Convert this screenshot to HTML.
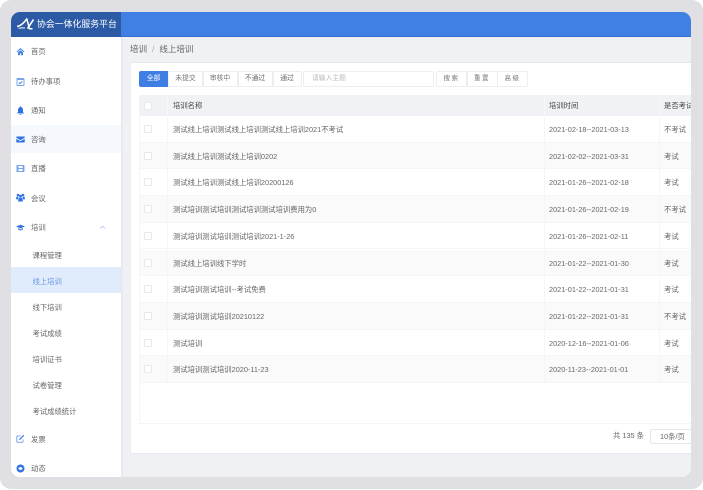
<!DOCTYPE html>
<html lang="zh">
<head>
<meta charset="utf-8">
<title>协会一体化服务平台</title>
<style>
html,body{margin:0;padding:0;background:#fff;}
body{width:703px;height:490px;overflow:hidden;position:relative;font-family:"Liberation Sans","Noto Sans CJK SC",sans-serif;font-size:7.33px;color:#666;}
.frame{position:absolute;left:0;top:0;width:703px;height:489px;background:#e0e0e4;border-radius:11px;}
.win{position:absolute;left:11px;top:12px;width:680px;height:465px;background:#f0f1f5;border-radius:9px;overflow:hidden;}
.blur{position:absolute;left:0;top:0;width:680px;height:465px;filter:blur(.3px);}
.a{position:absolute;white-space:nowrap;line-height:10px;}
.hd{position:absolute;left:0;top:0;width:680px;height:24px;background:#4080e4;border-bottom:1px solid #3270d8;}
.logo{position:absolute;left:0;top:0;width:110px;height:25px;background:#2c5aa5;}
.title{position:absolute;left:26px;top:7px;font-size:8.9px;line-height:11px;color:#fff;white-space:nowrap;}
.side{position:absolute;left:0;top:25px;width:110px;height:440px;background:#fff;}
.sep{position:absolute;left:110px;top:25px;width:2px;height:440px;background:#e9eaef;}
.m{position:absolute;left:20px;color:#666;white-space:nowrap;line-height:10px;}
.s{position:absolute;left:21.5px;color:#666;white-space:nowrap;line-height:10px;}
.ic{position:absolute;left:5px;width:9px;height:9px;}
.card{position:absolute;left:119px;top:50px;width:561px;height:392px;background:#fff;border-top:1px solid #e6e7ec;border-left:1px solid #ebecf0;border-bottom:1.5px solid #e8e9ee;box-sizing:border-box;}
.tab{position:absolute;top:59px;height:16px;box-sizing:border-box;background:#fff;border:1px solid #eceef2;text-align:center;line-height:14px;font-size:6.8px;color:#777;}
.hrow{position:absolute;left:128px;top:83px;width:552px;height:21px;background:#f1f2f6;}
.row{position:absolute;left:128px;width:552px;height:26.7px;box-sizing:border-box;border-bottom:1px solid #f4f5f8;}
.row.alt{background:#fafafa;}
.cb{position:absolute;left:5px;top:9px;width:8px;height:8px;box-sizing:border-box;border:1px solid #e8e9ed;border-radius:1px;background:#fff;}
.v{position:absolute;top:0;bottom:0;width:1px;background:#f5f6f9;}
.t{position:absolute;top:9px;line-height:10px;white-space:nowrap;color:#666;}
.th{position:absolute;top:6px;line-height:10px;white-space:nowrap;color:#444;}
</style>
</head>
<body>
<div class="frame"></div>
<div class="win"><div class="blur">
  <div class="hd"></div>
  <div class="logo">
    <svg style="position:absolute;left:6px;top:6px" width="18" height="12" viewBox="0 0 18 12"><path d="M0 8.500C3 8.300 6 6 9.800 1L12.500 10.800H15.500" fill="none" stroke="#fff" stroke-width="1.500"/><path d="M10.500 10.500L16.500 1.500" fill="none" stroke="#fff" stroke-width="1.600"/><path d="M1.500 10.300C3.500 9.800 5.500 9.800 8 10" fill="none" stroke="#fff" stroke-width="1"/></svg>
    <div class="title">协会一体化服务平台</div>
  </div>
  <div class="side">
    <div style="position:absolute;left:0;top:88px;width:110px;height:28px;background:#f5f8fd"></div>
    <div style="position:absolute;left:0;top:230px;width:110px;height:26px;background:#e0ebfb"></div>

    <svg class="ic" style="top:10px" viewBox="0 0 9 9"><path d="M4.500 1L0.500 4.800 1.300 5.300 4.500 2.400 7.700 5.300 8.500 4.800ZM2 5.500V8.300H3.900V6.200H5.100V8.300H7V5.500L4.500 3.200Z" fill="#3f7fe4"/></svg>
    <div class="m" style="top:10px">首页</div>

    <svg class="ic" style="top:40px" viewBox="0 0 9 9"><rect x="1" y="1.500" width="7" height="7" rx=".8" fill="none" stroke="#7ba4e8" stroke-width="1"/><path d="M1 1.500H8V3H1Z" fill="#7ba4e8"/><path d="M2.800 5.500L4 6.700 6.300 4.300" fill="none" stroke="#3f7fe4" stroke-width=".9"/></svg>
    <div class="m" style="top:40px">待办事项</div>

    <svg class="ic" style="top:68.500px" viewBox="0 0 9 9"><path d="M4.500 .5C5 .5 5.300 .8 5.300 1.300 6.500 1.700 7 2.800 7 4V6L8.200 7.400H.8L2 6V4C2 2.800 2.500 1.700 3.700 1.300 3.700 .8 4 .5 4.500 .5ZM3.500 7.900H5.500C5.500 8.500 5 8.900 4.500 8.900S3.500 8.500 3.500 7.900Z" fill="#2f72e0"/></svg>
    <div class="m" style="top:69px">通知</div>

    <svg class="ic" style="top:98px" viewBox="0 0 9 9"><path d="M.8 1.500H8.200C8.500 1.500 8.700 1.700 8.700 2V2.600L4.500 5.300 .3 2.600V2C.3 1.700 .5 1.500 .8 1.500ZM.3 3.700L4.500 6.300 8.700 3.700V7C8.700 7.300 8.500 7.500 8.200 7.500H.8C.5 7.500 .3 7.300 .3 7Z" fill="#2f72e0"/></svg>
    <div class="m" style="top:98px">咨询</div>

    <svg class="ic" style="top:127px" viewBox="0 0 9 9"><rect x=".5" y="1" width="8" height="7" rx=".8" fill="#7ba4e8"/><rect x="2.500" y="2" width="4" height="2" fill="#fff"/><rect x="2.500" y="5" width="4" height="2" fill="#fff"/></svg>
    <div class="m" style="top:127px">直播</div>

    <svg class="ic" style="top:156px" viewBox="0 0 9 9"><circle cx="2" cy="2" r="1.300" fill="#2f72e0"/><circle cx="7" cy="2" r="1.300" fill="#2f72e0"/><circle cx="4.500" cy="3.200" r="1.500" fill="#2f72e0"/><path d="M.2 3.800H2.500L2 6.400H.2ZM8.800 3.800H6.500L7 6.400H8.800ZM2.700 5H6.300L7 8.500H2Z" fill="#2f72e0"/></svg>
    <div class="m" style="top:157px">会议</div>

    <svg class="ic" style="top:185.500px" viewBox="0 0 9 9"><path d="M4.500 1.800L9 3.500 4.500 5.200 0 3.500Z" fill="#2f72e0"/><path d="M2 5V6.800C3.500 7.700 5.500 7.700 7 6.800V5L4.500 5.900Z" fill="#6b9ae8"/></svg>
    <div class="m" style="top:186px">培训</div>
    <svg style="position:absolute;left:88px;top:188px" width="7" height="5" viewBox="0 0 7 5"><path d="M1 3.500L3.500 1.200 6 3.500" fill="none" stroke="#a9c3ee" stroke-width=".8"/></svg>

    <div class="s" style="top:214px">课程管理</div>
    <div class="s" style="top:240px;color:#6a9ae6">线上培训</div>
    <div class="s" style="top:266px">线下培训</div>
    <div class="s" style="top:292px">考试成绩</div>
    <div class="s" style="top:318px">培训证书</div>
    <div class="s" style="top:344px">试卷管理</div>
    <div class="s" style="top:370px">考试成绩统计</div>

    <svg class="ic" style="top:397px" viewBox="0 0 9 9"><path d="M7 5.500V7.500C7 7.900 6.700 8.200 6.300 8.200H1.500C1.100 8.200 .8 7.900 .8 7.500V2.700C.8 2.300 1.100 2 1.500 2H4.500" fill="none" stroke="#7ba4e8" stroke-width="1"/><path d="M3.300 4.900L7.300 .9 8.200 1.800 4.200 5.800 3 6.100Z" fill="#3f7fe4"/></svg>
    <div class="m" style="top:398px">发票</div>

    <svg class="ic" style="top:426.500px" viewBox="0 0 9 9"><circle cx="4.500" cy="4.500" r="4" fill="#2f72e0"/><ellipse cx="4.500" cy="4.500" rx="2" ry="1.400" fill="#fff"/></svg>
    <div class="m" style="top:427px">动态</div>
  </div>
  <div class="sep"></div>

  <div class="a" style="left:119px;top:32px;font-size:8.5px;color:#666">培训<span style="color:#aaa;margin:0 5px">/</span>线上培训</div>

  <div class="card"></div>

  <div class="tab" style="left:128px;width:29px;background:#3f7fe4;border-color:#3f7fe4;color:#fff;border-radius:2px 0 0 2px">全部</div>
  <div class="tab" style="left:157px;width:35px">未提交</div>
  <div class="tab" style="left:191.500px;width:35px">审核中</div>
  <div class="tab" style="left:226.500px;width:35px;color:#666">不通过</div>
  <div class="tab" style="left:261.500px;width:29px;border-radius:0 2px 2px 0;color:#666">通过</div>
  <div class="tab" style="left:292px;width:131px;text-align:left;padding-left:8px;color:#bbb;border-radius:2px">请输入主题</div>
  <div class="tab" style="left:425px;width:31px;letter-spacing:1.500px;font-size:6.500px;border-radius:2px 0 0 2px">搜索</div>
  <div class="tab" style="left:455.500px;width:31px;letter-spacing:1.500px;font-size:6.500px">重置</div>
  <div class="tab" style="left:486px;width:31px;letter-spacing:1.500px;font-size:6.500px;border-radius:0 2px 2px 0">高级</div>

  <div class="hrow">
    <div class="cb" style="top:6.500px"></div>
    <div class="v" style="left:28px;background:#f7f8fa"></div>
    <div class="th" style="left:34px">培训名称</div>
    <div class="v" style="left:405px;background:#f7f8fa"></div>
    <div class="th" style="left:410px">培训时间</div>
    <div class="v" style="left:520px;background:#f7f8fa"></div>
    <div class="th" style="left:525px">是否考试</div>
  </div>

  <div class="row" style="top:104px"><div class="cb"></div><div class="v" style="left:28px"></div><div class="t" style="left:34px">测试线上培训测试线上培训测试线上培训2021不考试</div><div class="v" style="left:405px"></div><div class="t" style="left:410px">2021-02-18--2021-03-13</div><div class="v" style="left:520px"></div><div class="t" style="left:525px">不考试</div></div>
  <div class="row alt" style="top:130.700px"><div class="cb"></div><div class="v" style="left:28px"></div><div class="t" style="left:34px">测试线上培训测试线上培训0202</div><div class="v" style="left:405px"></div><div class="t" style="left:410px">2021-02-02--2021-03-31</div><div class="v" style="left:520px"></div><div class="t" style="left:525px">考试</div></div>
  <div class="row" style="top:157.400px"><div class="cb"></div><div class="v" style="left:28px"></div><div class="t" style="left:34px">测试线上培训测试线上培训20200126</div><div class="v" style="left:405px"></div><div class="t" style="left:410px">2021-01-26--2021-02-18</div><div class="v" style="left:520px"></div><div class="t" style="left:525px">考试</div></div>
  <div class="row alt" style="top:184.100px"><div class="cb"></div><div class="v" style="left:28px"></div><div class="t" style="left:34px">测试培训测试培训测试培训测试培训费用为0</div><div class="v" style="left:405px"></div><div class="t" style="left:410px">2021-01-26--2021-02-19</div><div class="v" style="left:520px"></div><div class="t" style="left:525px">不考试</div></div>
  <div class="row" style="top:210.800px"><div class="cb"></div><div class="v" style="left:28px"></div><div class="t" style="left:34px">测试培训测试培训测试培训2021-1-26</div><div class="v" style="left:405px"></div><div class="t" style="left:410px">2021-01-26--2021-02-11</div><div class="v" style="left:520px"></div><div class="t" style="left:525px">考试</div></div>
  <div class="row alt" style="top:237.500px"><div class="cb"></div><div class="v" style="left:28px"></div><div class="t" style="left:34px">测试线上培训线下学时</div><div class="v" style="left:405px"></div><div class="t" style="left:410px">2021-01-22--2021-01-30</div><div class="v" style="left:520px"></div><div class="t" style="left:525px">考试</div></div>
  <div class="row" style="top:264.200px"><div class="cb"></div><div class="v" style="left:28px"></div><div class="t" style="left:34px">测试培训测试培训--考试免费</div><div class="v" style="left:405px"></div><div class="t" style="left:410px">2021-01-22--2021-01-31</div><div class="v" style="left:520px"></div><div class="t" style="left:525px">考试</div></div>
  <div class="row alt" style="top:290.900px"><div class="cb"></div><div class="v" style="left:28px"></div><div class="t" style="left:34px">测试培训测试培训20210122</div><div class="v" style="left:405px"></div><div class="t" style="left:410px">2021-01-22--2021-01-31</div><div class="v" style="left:520px"></div><div class="t" style="left:525px">不考试</div></div>
  <div class="row" style="top:317.600px"><div class="cb"></div><div class="v" style="left:28px"></div><div class="t" style="left:34px">测试培训</div><div class="v" style="left:405px"></div><div class="t" style="left:410px">2020-12-16--2021-01-06</div><div class="v" style="left:520px"></div><div class="t" style="left:525px">考试</div></div>
  <div class="row alt" style="top:344.300px"><div class="cb"></div><div class="v" style="left:28px"></div><div class="t" style="left:34px">测试培训测试培训2020-11-23</div><div class="v" style="left:405px"></div><div class="t" style="left:410px">2020-11-23--2021-01-01</div><div class="v" style="left:520px"></div><div class="t" style="left:525px">考试</div></div>

  <div style="position:absolute;left:128px;top:104px;width:1px;height:306px;background:#f5f6f9"></div>
  <div style="position:absolute;left:128px;top:410.500px;width:552px;height:1px;background:#f4f5f8"></div>

  <div class="a" style="left:602px;top:419px">共 135 条</div>
  <div style="position:absolute;left:639px;top:417px;width:50px;height:15px;box-sizing:border-box;border:1px solid #e6e7ec;border-radius:2px;background:#fff;line-height:13px;padding-left:9px;white-space:nowrap">10条/页</div>
</div></div>
</body>
</html>
